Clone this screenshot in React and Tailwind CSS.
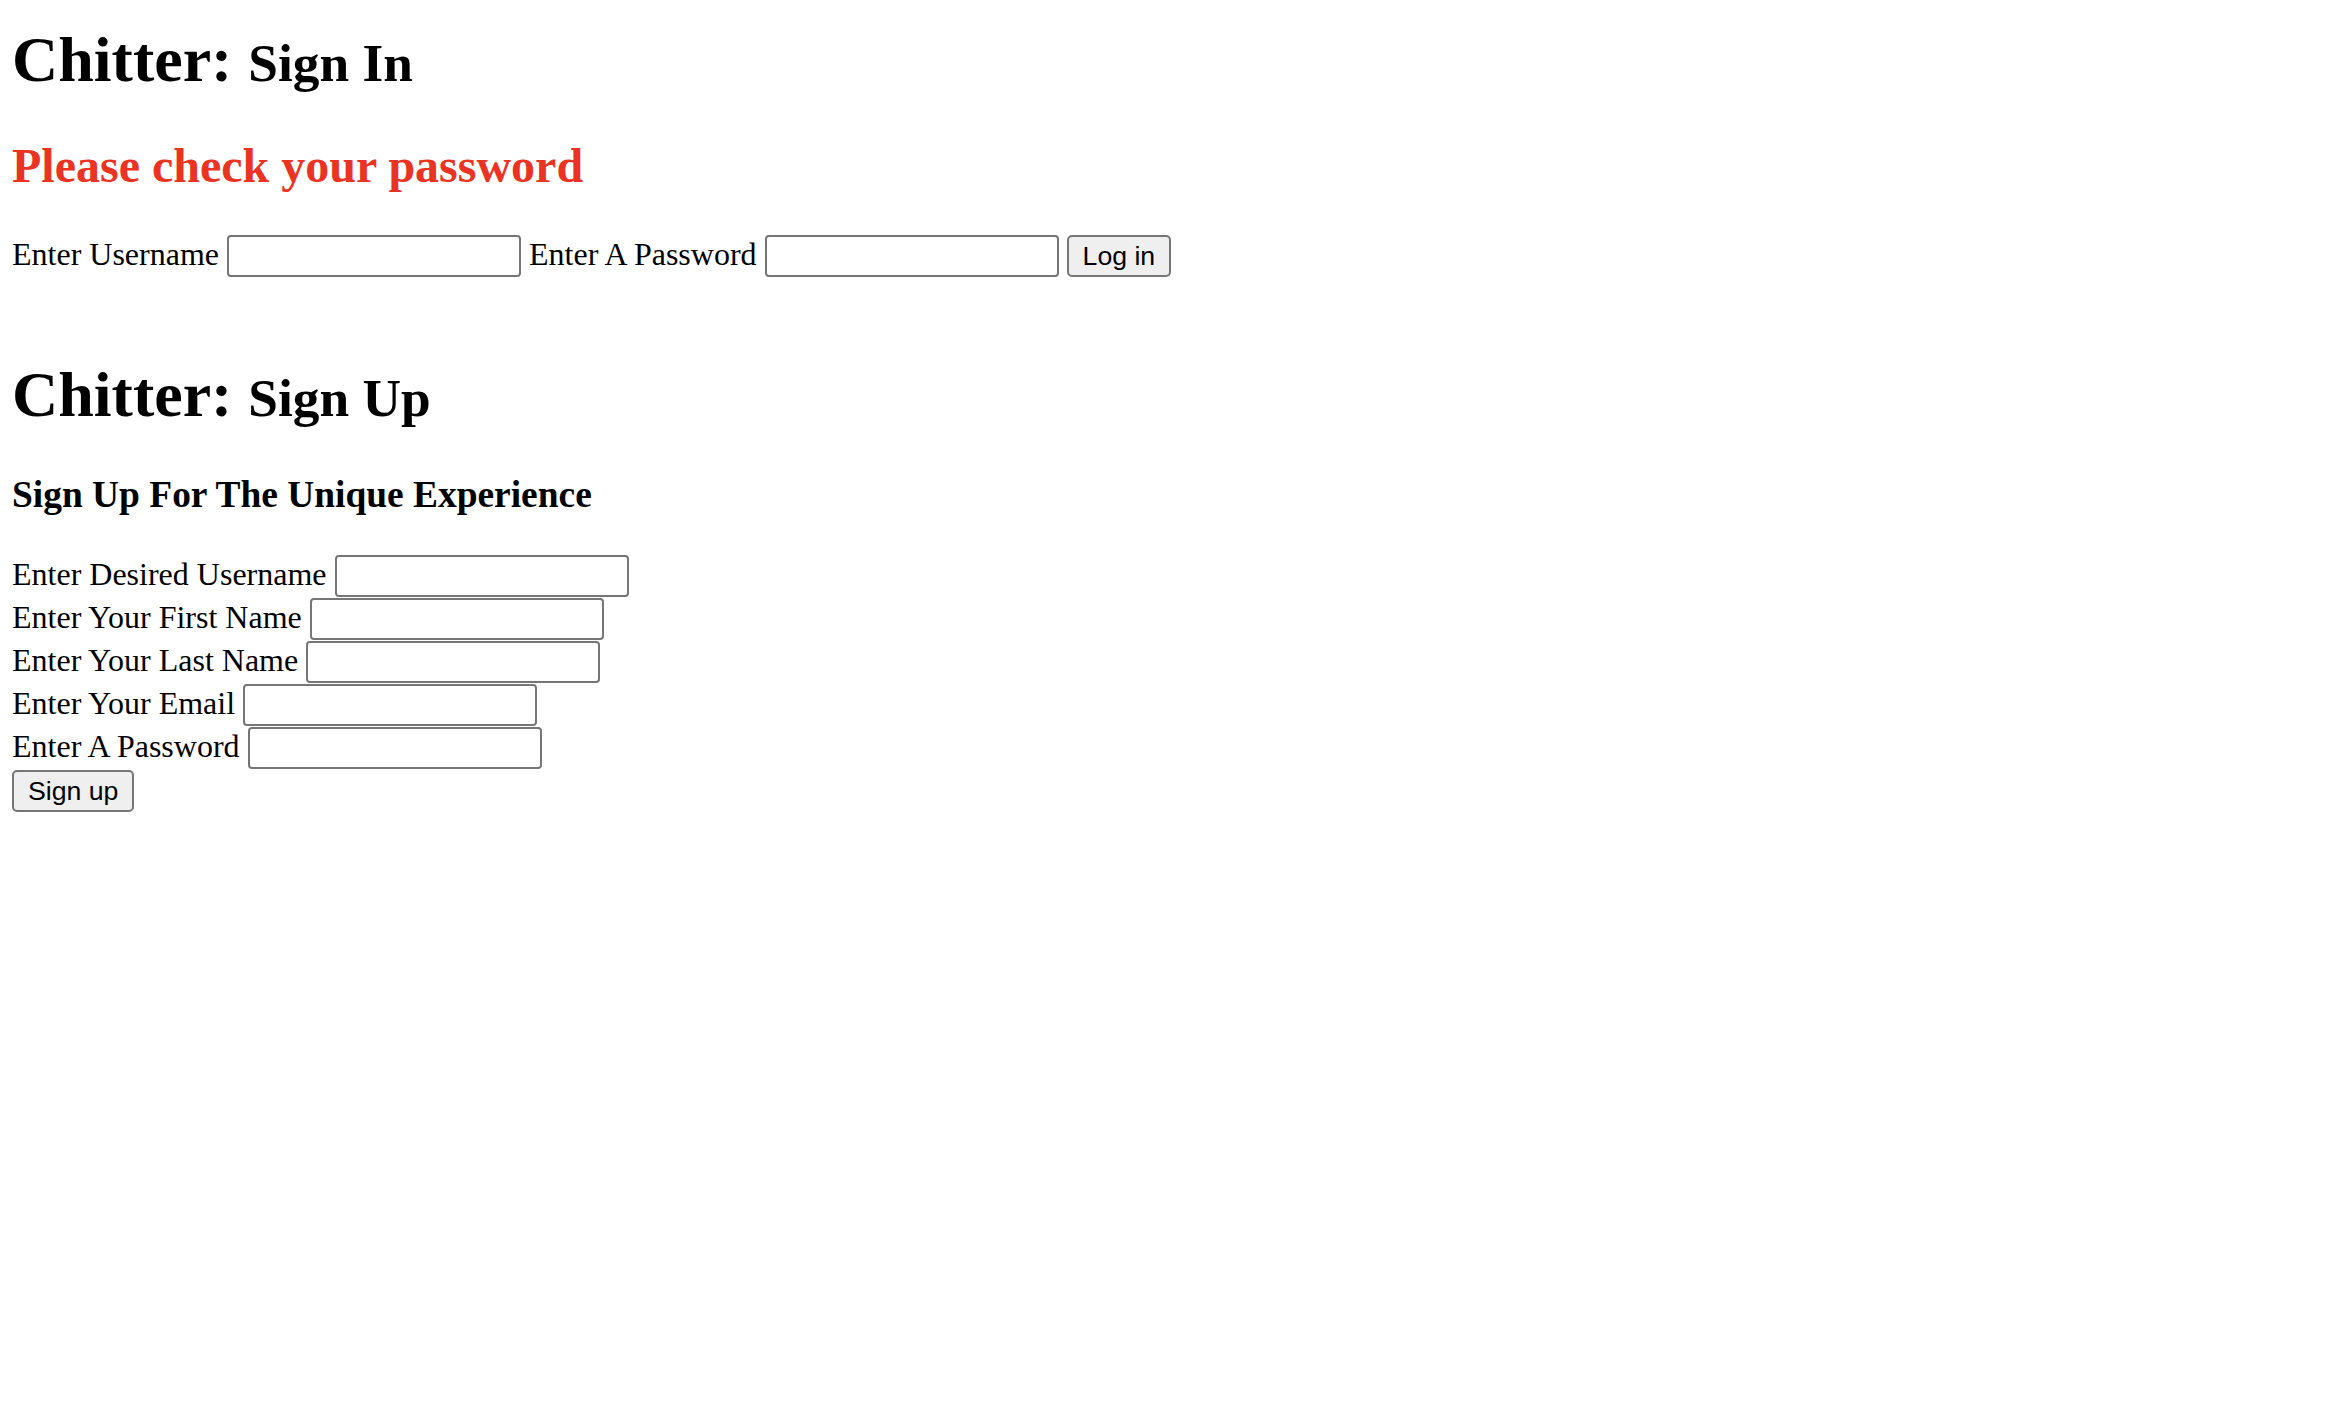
import { useState } from 'react';

const inputCls = "w-[294px] h-[42px] border-2 border-[#767676] rounded-[4px] px-[4px] py-[2px] bg-white text-[26.67px] leading-[normal] font-['Liberation_Sans',Arial,sans-serif] align-baseline outline-none";
const btnCls = "h-[42px] px-[14px] border-2 border-[#767676] rounded-[5px] bg-[#efefef] text-black text-[26.67px] leading-[normal] font-['Liberation_Sans',Arial,sans-serif] align-baseline";

export default function App(){
  const [login,setLogin]=useState({ username:'', password:'' });
  const [signup,setSignup]=useState({ username:'', first:'', last:'', email:'', password:'' });
  const fields = [
    ['username','Enter Desired Username','text'],
    ['first','Enter Your First Name','text'],
    ['last','Enter Your Last Name','text'],
    ['email','Enter Your Email','email'],
    ['password','Enter A Password','password'],
  ];
  return (
    <div className="min-h-screen bg-white text-black pl-[12px] pt-[24px] font-['Liberation_Serif','Times_New_Roman',serif] text-[32px] leading-[normal]">
      <h1 className="text-[64px] leading-[71px] font-bold whitespace-nowrap">
        Chitter: <span className="text-[53.33px] leading-[normal]">Sign In</span>
      </h1>
      <h2 className="mt-[44px] text-[48px] leading-[53px] font-bold text-[#ea3323]">Please check your password</h2>
      <form onSubmit={e=>e.preventDefault()} className="mt-[43px] h-[42px] whitespace-nowrap">
        Enter Username{' '}
        <input className={inputCls} value={login.username} onChange={e=>setLogin({...login,username:e.target.value})} />{' '}
        Enter A Password{' '}
        <input type="password" className={inputCls} value={login.password} onChange={e=>setLogin({...login,password:e.target.value})} />{' '}
        <button type="submit" className={btnCls}>Log in</button>
      </form>

      <h1 className="mt-[82px] text-[64px] leading-[71px] font-bold whitespace-nowrap">
        Chitter: <span className="text-[53.33px] leading-[normal]">Sign Up</span>
      </h1>
      <h3 className="mt-[44px] text-[37.44px] leading-[41px] font-bold">Sign Up For The Unique Experience</h3>
      <form onSubmit={e=>e.preventDefault()} className="mt-[40px]">
        {fields.map(([k,label,type])=>(
          <div key={k} className="h-[43px] whitespace-nowrap">
            {label}{' '}
            <input type={type} className={inputCls} value={signup[k]} onChange={e=>setSignup({...signup,[k]:e.target.value})} />
          </div>
        ))}
        <div className="h-[43px]">
          <button type="submit" className={btnCls}>Sign up</button>
        </div>
      </form>
    </div>
  );
}
